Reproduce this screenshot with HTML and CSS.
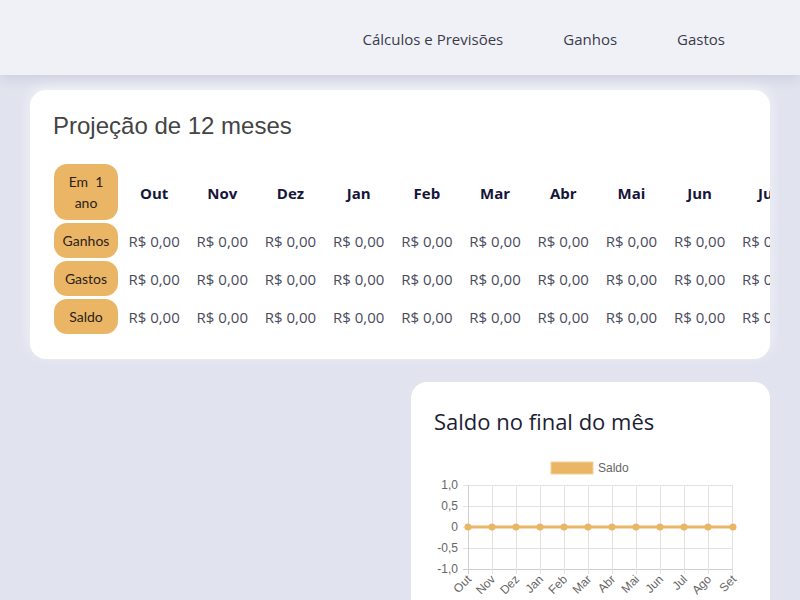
FILE: index.html
```html
<!DOCTYPE html>
<html lang="pt-BR">
<head>
<meta charset="utf-8">
<title>Projeção</title>
<link rel="stylesheet" href="styles.css">
</head>
<body>
<header class="topbar">
  <nav class="nav">
    <a class="nav-link" href="#">Cálculos e Previsões</a>
    <a class="nav-link" href="#">Ganhos</a>
    <a class="nav-link" href="#">Gastos</a>
  </nav>
</header>
<main class="content">
  <section class="card projection">
    <h2 class="card-title-main">Projeção de 12 meses</h2>
    <div class="table">
      <div class="pill pill-head">Em&nbsp; 1<br>ano</div>
      <div class="month">Out</div><div class="month">Nov</div><div class="month">Dez</div><div class="month">Jan</div><div class="month">Feb</div><div class="month">Mar</div><div class="month">Abr</div><div class="month">Mai</div><div class="month">Jun</div><div class="month">Jul</div><div class="month">Ago</div><div class="month">Set</div>
      <div class="pill">Ganhos</div>
      <div class="val">R$ 0,00</div><div class="val">R$ 0,00</div><div class="val">R$ 0,00</div><div class="val">R$ 0,00</div><div class="val">R$ 0,00</div><div class="val">R$ 0,00</div><div class="val">R$ 0,00</div><div class="val">R$ 0,00</div><div class="val">R$ 0,00</div><div class="val">R$ 0,00</div><div class="val">R$ 0,00</div><div class="val">R$ 0,00</div>
      <div class="pill">Gastos</div>
      <div class="val">R$ 0,00</div><div class="val">R$ 0,00</div><div class="val">R$ 0,00</div><div class="val">R$ 0,00</div><div class="val">R$ 0,00</div><div class="val">R$ 0,00</div><div class="val">R$ 0,00</div><div class="val">R$ 0,00</div><div class="val">R$ 0,00</div><div class="val">R$ 0,00</div><div class="val">R$ 0,00</div><div class="val">R$ 0,00</div>
      <div class="pill">Saldo</div>
      <div class="val">R$ 0,00</div><div class="val">R$ 0,00</div><div class="val">R$ 0,00</div><div class="val">R$ 0,00</div><div class="val">R$ 0,00</div><div class="val">R$ 0,00</div><div class="val">R$ 0,00</div><div class="val">R$ 0,00</div><div class="val">R$ 0,00</div><div class="val">R$ 0,00</div><div class="val">R$ 0,00</div><div class="val">R$ 0,00</div>
    </div>
  </section>
  <div class="row">
    <div class="spacer"></div>
    <section class="card chart-card">
      <h2 class="card-title">Saldo no final do mês</h2>
      <svg class="chart" width="320" height="160" viewBox="0 0 320 160">
        <rect x="117" y="8" width="42" height="12" fill="#ebb566" stroke="#f3cf99" stroke-width="1"/>
        <text x="164" y="18" class="legend">Saldo</text>
        <g stroke="#e2e2e2" stroke-width="1">
          <line x1="29" y1="31.5" x2="299" y2="31.5"/>
          <line x1="29" y1="52.5" x2="299" y2="52.5"/>
          <line x1="29" y1="73.5" x2="299" y2="73.5"/>
          <line x1="29" y1="94.5" x2="299" y2="94.5"/>
          <line x1="29" y1="115.5" x2="299" y2="115.5" stroke="#cfcfcf"/>
          <line x1="34.5" y1="31" x2="34.5" y2="120" stroke="#cfcfcf"/>
          <line x1="58.5" y1="31" x2="58.5" y2="120"/>
          <line x1="82.5" y1="31" x2="82.5" y2="120"/>
          <line x1="106.5" y1="31" x2="106.5" y2="120"/>
          <line x1="130.5" y1="31" x2="130.5" y2="120"/>
          <line x1="154.5" y1="31" x2="154.5" y2="120"/>
          <line x1="178.5" y1="31" x2="178.5" y2="120"/>
          <line x1="202.5" y1="31" x2="202.5" y2="120"/>
          <line x1="226.5" y1="31" x2="226.5" y2="120"/>
          <line x1="250.5" y1="31" x2="250.5" y2="120"/>
          <line x1="274.5" y1="31" x2="274.5" y2="120"/>
          <line x1="298.5" y1="31" x2="298.5" y2="120"/>
        </g>
        <g class="ytick" text-anchor="end">
          <text x="24" y="35">1,0</text>
          <text x="24" y="56">0,5</text>
          <text x="24" y="77">0</text>
          <text x="24" y="98">-0,5</text>
          <text x="24" y="119">-1,0</text>
        </g>
        <line x1="34" y1="73" x2="299" y2="73" stroke="#ebb566" stroke-width="3"/>
        <g fill="#ebb566">
          <circle cx="34" cy="73" r="3.5"/><circle cx="58" cy="73" r="3.5"/><circle cx="82" cy="73" r="3.5"/><circle cx="106" cy="73" r="3.5"/><circle cx="130" cy="73" r="3.5"/><circle cx="154" cy="73" r="3.5"/><circle cx="178" cy="73" r="3.5"/><circle cx="202" cy="73" r="3.5"/><circle cx="226" cy="73" r="3.5"/><circle cx="250" cy="73" r="3.5"/><circle cx="274" cy="73" r="3.5"/><circle cx="299" cy="73" r="3.5"/>
        </g>
        <g class="xtick" text-anchor="end">
          <text transform="translate(38 126) rotate(-45)">Out</text>
          <text transform="translate(62 126) rotate(-45)">Nov</text>
          <text transform="translate(86 126) rotate(-45)">Dez</text>
          <text transform="translate(110 126) rotate(-45)">Jan</text>
          <text transform="translate(134 126) rotate(-45)">Feb</text>
          <text transform="translate(158 126) rotate(-45)">Mar</text>
          <text transform="translate(182 126) rotate(-45)">Abr</text>
          <text transform="translate(206 126) rotate(-45)">Mai</text>
          <text transform="translate(230 126) rotate(-45)">Jun</text>
          <text transform="translate(254 126) rotate(-45)">Jul</text>
          <text transform="translate(278 126) rotate(-45)">Ago</text>
          <text transform="translate(303 126) rotate(-45)">Set</text>
        </g>
      </svg>
    </section>
  </div>
</main>
</body>
</html>
```

FILE: styles.css
```css
* { box-sizing: border-box; }
html, body { margin: 0; padding: 0; }
body {
  background: #e1e3ef;
  font-family: "Open Sans", "Liberation Sans", sans-serif;
  overflow: hidden;
  height: 600px;
}
.topbar {
  height: 75px;
  background: #f0f1f7;
  box-shadow: 0 4px 12px rgba(40, 44, 80, 0.10);
  display: flex;
  justify-content: flex-end;
  align-items: center;
  padding-right: 75px;
  position: relative;
  z-index: 1;
}
.nav { display: flex; gap: 60px; }
.nav-link {
  color: #3a3b4a;
  text-decoration: none;
  font-size: 15px;
  line-height: 20px;
  margin-top: 3px;
}
.content {
  padding: 15px 30px 0;
  display: flex;
  flex-direction: column;
  gap: 23px;
}
.card {
  background: #fff;
  border-radius: 16px;
  overflow: hidden;
}
.projection {
  padding: 22px 0 25px 24px;
  box-shadow: 0 -4px 14px rgba(255,255,255,0.6);
}
.card-title-main {
  margin: 0 0 24px -1px;
  font-family: "Liberation Sans", Arial, sans-serif;
  font-weight: normal;
  font-size: 24px;
  line-height: 28px;
  color: #444;
}
.table {
  display: grid;
  grid-template-columns: 65px repeat(12, 68.2px);
  grid-auto-rows: 35px;
  grid-template-rows: 56px;
  row-gap: 3px;
  column-gap: 0;
  width: max-content;
}
.pill {
  background: #ebb566;
  border-radius: 13px;
  display: flex;
  align-items: center;
  justify-content: center;
  text-align: center;
  font-family: "Lato", "Noto Sans", sans-serif;
  font-size: 14px;
  color: #2a2218;
  margin-right: 1px;
}
.pill-head { line-height: 21px; }
.month {
  display: flex;
  align-items: center;
  justify-content: center;
  font-weight: bold;
  font-size: 15px;
  color: #16163a;
  padding-left: 2px;
  padding-top: 2px;
}
.val {
  display: flex;
  align-items: center;
  justify-content: center;
  font-size: 15px;
  color: #4a4b5c;
  padding-left: 2px;
}
.row {
  display: grid;
  grid-template-columns: 1fr 1fr;
  gap: 22px;
}
.chart-card {
  padding: 24px 23px 0;
  height: 240px;
}
.card-title {
  margin: 0;
  font-weight: normal;
  font-size: 22px;
  line-height: 30px;
  color: #1d1d35;
}
.chart { display: block; margin-top: 18px; overflow: visible; }
.legend, .ytick text, .xtick text {
  font-family: "Liberation Sans", Arial, sans-serif;
  font-size: 12px;
  fill: #666;
}
```
